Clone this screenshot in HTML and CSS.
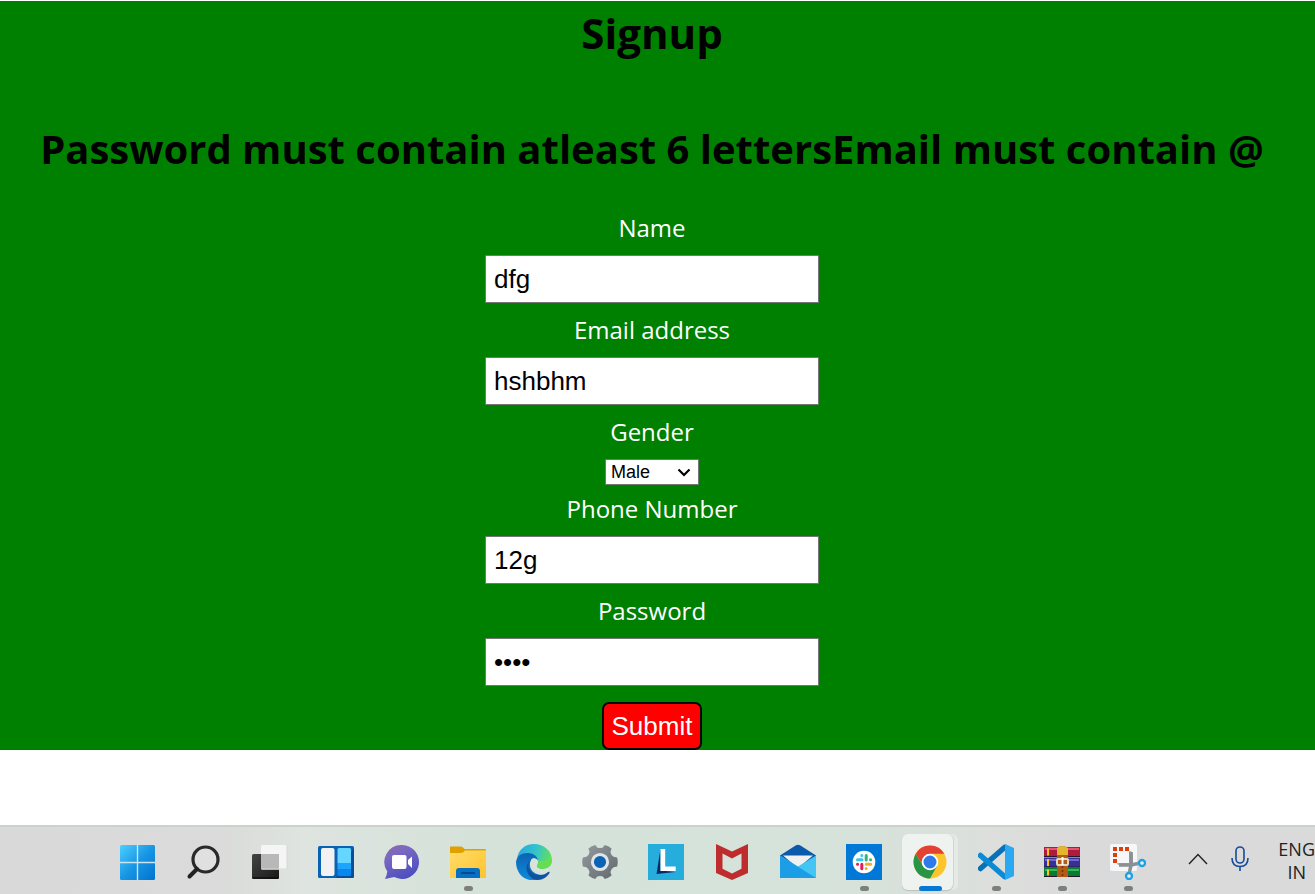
FILE: index.html
```html
<!DOCTYPE html>
<html lang="en">
<head>
<meta charset="utf-8">
<title>Signup</title>
<link rel="stylesheet" href="styles.css">
</head>
<body>
<main class="signup">
  <h1 class="title">Signup</h1>
  <h2 class="title message">Password must contain atleast 6 lettersEmail must contain @</h2>
  <form class="form">
    <div class="field"><label for="name">Name</label><input id="name" type="text" value="dfg"></div>
    <div class="field"><label for="email">Email address</label><input id="email" type="text" value="hshbhm"></div>
    <div class="field field-select"><label for="gender">Gender</label>
      <div class="select-wrap">
        <select id="gender"><option>Male</option><option>Female</option><option>Other</option></select>
        <svg class="arrow" viewBox="0 0 14 9"><path d="M1.500 1.500 7 7l5.500-5.500" fill="none" stroke="#000" stroke-width="2.200"/></svg>
      </div>
    </div>
    <div class="field"><label for="phone">Phone Number</label><input id="phone" type="text" value="12g"></div>
    <div class="field"><label for="password">Password</label><input id="password" type="password" value="abcd"></div>
    <button class="submit" type="button">Submit</button>
  </form>
</main>

<footer class="taskbar">
  <nav class="apps" aria-label="Taskbar">
    <button class="app" aria-label="Start"><svg viewBox="0 0 36 36"><defs><linearGradient id="win" x1="0" y1="0" x2="1" y2="1"><stop offset="0" stop-color="#4cd0ff"/><stop offset=".5" stop-color="#1996e4"/><stop offset="1" stop-color="#0073d0"/></linearGradient></defs><rect x="0" y="1" width="35" height="35" rx="1.500" fill="url(#win)"/><path d="M17.500 1v35M0 18.500h35" stroke="#cbe4ee" stroke-width="1.400"/></svg></button>
    <button class="app" aria-label="Search"><svg viewBox="0 0 36 36"><circle cx="19.500" cy="15.500" r="12.500" fill="#e0e0e0" stroke="#292929" stroke-width="3.200"/><path d="m11 25-7.500 7.500" stroke="#222" stroke-width="4" stroke-linecap="round"/></svg></button>
    <button class="app" aria-label="Task view"><svg viewBox="0 0 36 36"><defs><linearGradient id="tv" x1="0" y1="0" x2="1" y2="1"><stop stop-color="#444"/><stop offset="1" stop-color="#181818"/></linearGradient></defs><rect x="0" y="10" width="27" height="25" rx="1.500" fill="url(#tv)"/><path d="M.5 34h26" stroke="#050505"/><rect x="9" y="1" width="26" height="24.500" rx="1.500" fill="#f5f5f5"/><path d="M9 10h18v15H9z" fill="#b8b8b8"/><path d="M9.500 25H35V1" fill="none" stroke="#d5d8d6"/></svg></button>
    <button class="app" aria-label="Widgets"><svg viewBox="0 0 36 36"><rect y="2" width="36" height="32" rx="1.500" fill="#0962b3"/><path d="M18 34h16.500q1.500 0 1.500-1.500V3.500Z" fill="#074487" opacity=".6"/><rect x="3" y="4" width="13.500" height="28" rx="2" fill="#f2f2f2"/><path d="M19.500 5.500q0-1.500 1.500-1.500h10.500q1.500 0 1.500 1.500V19H19.500z" fill="#64d6ff"/><path d="M19.500 19H33v6H19.500z" fill="#1da5fb"/><path d="M19.500 25H33v5.500q0 1.500-1.500 1.500H21q-1.500 0-1.500-1.500z" fill="#0888ee"/></svg></button>
    <button class="app" aria-label="Chat"><svg viewBox="0 0 36 36"><defs><linearGradient id="chat" x1=".1" y1="0" x2=".6" y2="1"><stop stop-color="#8a6aa8"/><stop offset=".3" stop-color="#7b68c3"/><stop offset="1" stop-color="#4b4fbe"/></linearGradient></defs><path d="M18 1a17 17 0 1 1-7.800 32.100L1 35q2-4 2.300-7.500A17 17 0 0 1 18 1Z" fill="url(#chat)"/><rect x="8" y="11" width="14.500" height="14" rx="2" fill="#fff"/><path d="m24 16 4-3.500V24l-4-4z" fill="#fff"/></svg></button>
    <button class="app running" aria-label="File Explorer"><svg viewBox="0 0 36 36"><defs><linearGradient id="fold" x1="0" y1="0" x2="1" y2="1"><stop stop-color="#ffdd6b"/><stop offset="1" stop-color="#ffc22b"/></linearGradient></defs><path d="M0 2.500h11q2 0 3.500 2.500H35q1 0 1 1V12H0z" fill="#dfa000"/><path d="M0 9h11q2 0 4-2.500h21V34H0z" fill="url(#fold)"/><path d="M6 34v-7q0-3 3-3h18q3 0 3 3v7z" fill="#0870c4"/><path d="M11 29h14" stroke="#064887" stroke-width="1.800"/></svg></button>
    <button class="app" aria-label="Edge"><svg viewBox="0 0 36 36"><defs><linearGradient id="eg" x1="0" y1=".4" x2="1" y2=".6"><stop stop-color="#29a9df"/><stop offset=".5" stop-color="#32c4cb"/><stop offset="1" stop-color="#68e34b"/></linearGradient><linearGradient id="eb" x1="0" y1="0" x2="0" y2="1"><stop stop-color="#0b63b2"/><stop offset="1" stop-color="#108bdc"/></linearGradient></defs><path d="M1 15C2 6 9 0 18 0c10 0 18 7 18 16 0 6-4 9-9 9-4 0-7-1-6-3 2-2 2-5 0-8-4-6-15-6-20 1Z" fill="url(#eg)"/><path d="M0 18C1 11 7 8.500 12 9c6 .3 10 4 10 8-2-4-7-4-8 2-1 8 6 12 12 12l-2 4C10 40 0 30 0 18Z" fill="url(#eb)"/><path d="M15 16c-6 6 0 15 9 15 3 0 6-1 8-3 1-.7 2 0 1.500 1C31 33 27 36 22 36c-10 0-16-14-7-20Z" fill="#1054a0"/><path d="M15 16c2-3 7-1 7 2 0 2-3 4 0 6 3 2.500 8 1 11-1v4c-7 4-20 0-18-11Z" fill="#d7e4db"/><path d="M22 17c.5 3-2 4-.5 6 3 2.500 9 2.500 12-1 1.600-1.700 2.500-4 2.500-6Z" fill="#67dd54"/></svg></button>
    <button class="app" aria-label="Settings"><svg viewBox="0 0 36 36"><defs><linearGradient id="gear" x1="0" y1="0" x2="1" y2="1"><stop stop-color="#959a9d"/><stop offset="1" stop-color="#606970"/></linearGradient></defs><path d="m13.300 1 1.800 2.400q2.900 1.200 5.800 0L22.700 1q3.600.8 6.900 3.500l-1.200 3.400q.5 3.200 3.200 4.800l3.500.7q1.300 4.600 0 9.200l-3.500.7q-2.700 1.600-3.200 4.800l1.200 3.400q-3.300 2.700-6.900 3.500l-1.800-2.400q-2.900-1.200-5.800 0L13.300 35q-3.600-.8-6.900-3.500l1.200-3.400q-.5-3.200-3.200-4.800l-3.500-.7q-1.300-4.600 0-9.200l3.500-.7q2.700-1.600 3.200-4.800L6.400 4.500Q9.700 1.800 13.300 1Z" fill="url(#gear)"/><circle cx="18" cy="18" r="7.600" fill="#0a63b5" stroke="#e0e4e5" stroke-width="3"/></svg></button>
    <button class="app" aria-label="Lenovo Vantage"><svg viewBox="0 0 36 36"><path d="M0 0h36v36H0z" fill="#26addb"/><path d="m12.500 5-4 25 4-3zM8.500 30l19-2-15-1.500z" fill="#062c68"/><path d="M12.500 5h4.700v17.500h10.500V27H12.500z" fill="#fff"/></svg></button>
    <button class="app" aria-label="McAfee"><svg viewBox="0 0 36 36"><path d="m2 0 16 7.500L34 0v29l-16 7-16-7zm6.500 9.500v15.300L18 29.500l9.500-4.700V9.500L18 14.500z" fill="#bf2c2e" fill-rule="evenodd"/></svg></button>
    <button class="app" aria-label="Mail"><svg viewBox="0 0 36 36"><path d="M0 11.500 16 1.300q2-1.200 4 0l16 10.200V20H0z" fill="#0a59aa"/><path d="M3 11.500h30L18 24z" fill="#f0f0f1"/><path d="M0 11.500 18 22.500 36 11.500V34H0z" fill="#43c6f3"/><path d="m0 11.500 36 22.500H0z" fill="#1b9ee6"/></svg></button>
    <button class="app running" aria-label="Slack"><svg viewBox="0 0 36 36"><path d="M0 0h36v36H0z" fill="#0078d7"/><circle cx="18" cy="18" r="11.300" fill="#fff"/><g stroke-width="3" stroke-linecap="round"><path d="M11.500 15.800h4.500M15.800 11.500v.1" stroke="#36c5f0"/><path d="M20.200 11.500v4.500M24.500 15.800h.1" stroke="#2eb67d"/><path d="M20.200 20.200h4.500M20.200 24.500v.1" stroke="#ecb22e"/><path d="M15.800 20.200v4.500M11.500 20.200h.1" stroke="#e01e5a"/></g></svg></button>
    <button class="app running active" aria-label="Chrome"><svg viewBox="0 0 36 36"><circle cx="18" cy="18" r="16.500" fill="#fdc52b"/><path d="M3.700 9.800A16.500 16.500 0 0 1 32.300 9.800H18L11 22z" fill="#e34133"/><path d="M3.700 9.800A16.500 16.500 0 0 0 18 34.500l7.100-12.400H10.900z" fill="#299447"/><circle cx="18" cy="18" r="7.400" fill="#2e7aea" stroke="#fff" stroke-width="1.800"/></svg></button>
    <button class="app running" aria-label="Visual Studio Code"><svg viewBox="0 0 36 36"><path d="m2.500 24.500 24-21" stroke="#0872b8" stroke-width="5.500" stroke-linecap="round"/><path d="m2.500 11.500 24 21" stroke="#0b8bd4" stroke-width="5.500" stroke-linecap="round"/><path d="M27 0 36 4v28l-9 4z" fill="#2ba8f2"/></svg></button>
    <button class="app running" aria-label="WinRAR"><svg viewBox="0 0 36 36"><path d="M0 3h36v10H0z" fill="#ae1b3b"/><path d="M1 5h34" stroke="#e45573" stroke-width="2"/><path d="M0 13.500h36v10H0z" fill="#373098"/><path d="M1 16h34" stroke="#7268cc" stroke-width="2"/><path d="M0 24h36v8.500H0z" fill="#0c7933"/><path d="M1 26h34" stroke="#31bd55" stroke-width="2"/><path d="M0 12.500h36M0 23h36M0 32.500h36" stroke="#26152c"/><path d="M4 4.500v7M4 15v7M4 25.500v6" stroke="#ffc51c" stroke-width="2"/><path d="M13 4q5-4 11 0v29H13z" fill="#b35a17"/><path d="M13 4q5-4 11 0v7H13z" fill="#e5b52b"/><path d="M18.500 14v18" stroke="#713200" stroke-width="1.500" stroke-dasharray="2 2"/><rect x="13" y="15" width="11" height="6" rx="1" fill="none" stroke="#e2d8bd" stroke-width="2"/><path d="M18.500 13v8" stroke="#fff" stroke-width="2"/></svg></button>
    <button class="app running" aria-label="Snipping Tool"><svg viewBox="0 0 36 36"><rect width="27" height="27" rx="2" fill="#f5f7f9"/><path d="M3 3h4v4H3zM9 3h4v4H9zM15 3h4v4h-4zM3 9h4v4H3zM3 15h4v4H3z" fill="#dc3f0c"/><path d="M19 7q4 0 4 4v10H10q-3 0-3-2h12z" fill="#a6abae"/><path d="M21 8v13l-1.500 7M9 21h12l7-1.500" fill="none" stroke="#8b9094" stroke-width="3.500"/><circle cx="19" cy="32" r="3" fill="#e8eef2" stroke="#1ca1e5" stroke-width="2.300"/><circle cx="32" cy="19" r="3" fill="#e8eef2" stroke="#1ca1e5" stroke-width="2.300"/></svg></button>
  </nav>
  <div class="tray">
    <button class="tray-button" aria-label="Show hidden icons"><svg class="chevron" viewBox="0 0 20 12"><path d="m1 11 9-9.500 9 9.500" fill="none" stroke="#222" stroke-width="1.400"/></svg></button>
    <button class="tray-button" aria-label="Microphone"><svg class="mic" viewBox="0 0 18 26"><rect x="5" y="1" width="8" height="16" rx="4" fill="none" stroke="#164b99" stroke-width="1.600"/><path d="M1 12q0 8.500 8 8.500t8-8.500M9 20.500V25" fill="none" stroke="#164b99" stroke-width="1.600"/></svg></button>
    <button class="language">ENG<br>IN</button>
  </div>
</footer>
</body>
</html>
```
FILE: styles.css
```css
* { box-sizing: border-box; }

body {
  display: flex;
  flex-direction: column;
  min-height: 100vh;
  margin: 0;
  background: #fff;
  font-family: "Open Sans", "Noto Sans", sans-serif;
  overflow-x: hidden;
}

.signup {
  margin-top: 1px;
  padding: 2px 11px 0 0;
  background: #008000;
  text-align: center;
}

.title {
  margin: 0;
  color: #000;
  font-size: 42px;
  font-weight: 700;
  line-height: 60px;
}

.message {
  margin: 56px 0 22px;
  font-size: 40px;
  white-space: nowrap;
}

.form {
  display: flex;
  flex-direction: column;
  align-items: center;
}

.field {
  display: flex;
  flex-direction: column;
  align-items: center;
  gap: 9px;
  padding-top: 9px;
}

.field label {
  color: #fff;
  font-size: 24px;
  line-height: 36px;
}

.field input {
  width: 334px;
  height: 48px;
  padding: 0 8px;
  border: 1px solid #767676;
  border-radius: 1px;
  background: #fff;
  color: #000;
  font: 26px "Liberation Sans", Arial, sans-serif;
}

.field-select { margin-bottom: -3px; }

.select-wrap { position: relative; }

.select-wrap select {
  display: block;
  width: 94px;
  height: 26px;
  padding: 0 5px;
  appearance: none;
  border: 1px solid #767676;
  border-radius: 1px;
  background: #fff;
  color: #000;
  font: 18px "Liberation Sans", Arial, sans-serif;
}

.arrow {
  position: absolute;
  top: 9px;
  right: 8px;
  width: 14px;
  height: 9px;
  pointer-events: none;
}

.submit {
  height: 48px;
  margin-top: 16px;
  padding: 0 8px;
  border: 2px solid #000;
  border-radius: 7px;
  background: #f00;
  color: #fff;
  font: 26px "Liberation Sans", Arial, sans-serif;
}

.taskbar {
  display: flex;
  justify-content: space-between;
  height: 69px;
  margin-top: auto;
  padding-left: 105px;
  border-top: 2px solid #cad2cc;
  background: linear-gradient(90deg, #d9d9d9 0, #dadbda 17%, #dee4df 23%, #d5e2da 36%, #d6e2da 66%, #dcdfdc 75%, #dadada 82%);
}

.apps { display: flex; }

.app {
  position: relative;
  z-index: 0;
  display: flex;
  flex-direction: column;
  align-items: center;
  gap: 6px;
  width: 66px;
  padding: 17px 0 0;
  border: 0;
  background: none;
}

.app svg {
  width: 36px;
  height: 36px;
}

.running::after {
  content: "";
  width: 9px;
  height: 5px;
  border-radius: 3px;
  background: #7c807d;
}

.active::before {
  content: "";
  position: absolute;
  z-index: -1;
  inset: 7px 10px 4px 5px;
  border-radius: 6px;
  background: #eff3f0;
  box-shadow: 0 1px 1px #bbc1bd, 1px 0 0 #d3d8d5, 5px 0 0 #e6eae7;
}

.active::after {
  width: 23px;
  background: #0878d2;
}

.tray {
  display: flex;
  align-items: center;
}

.tray-button,
.language {
  padding: 0;
  border: 0;
  background: none;
}

.tray-button { width: 42px; }

.chevron {
  width: 20px;
  height: 12px;
}

.mic {
  width: 18px;
  height: 26px;
}

.language {
  margin-left: 17px;
  color: #222;
  font: 18px/23px "Open Sans", "Noto Sans", sans-serif;
}
```
